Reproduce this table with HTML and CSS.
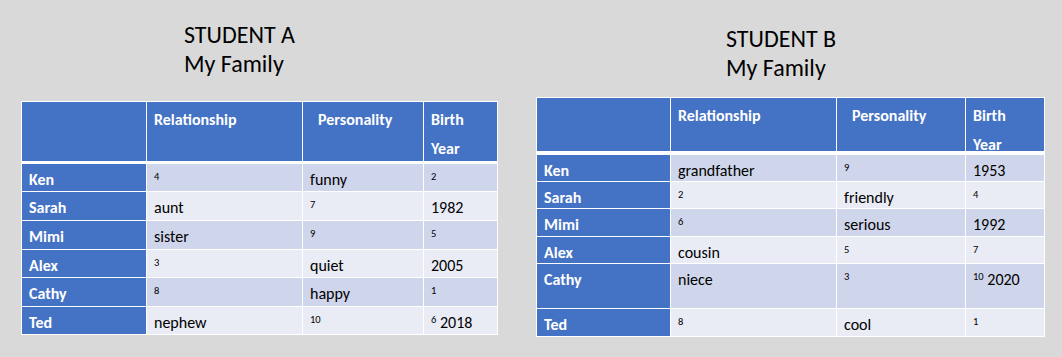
FILE: index.html
```html
<!DOCTYPE html>
<html lang="en">
<head>
<meta charset="utf-8">
<title>My Family</title>
<link rel="stylesheet" href="styles.css">
</head>
<body>
<main class="page">
  <section class="panel panel-a">
    <h1 class="title">STUDENT A<br>My Family</h1>
    <table class="fam fam-a">
      <colgroup>
        <col class="c-name"><col class="c-rel"><col class="c-per"><col class="c-year">
      </colgroup>
      <thead>
        <tr class="head">
          <th></th>
          <th>Relationship</th>
          <th class="th-per">Personality</th>
          <th><div class="two-line">Birth<br>Year</div></th>
        </tr>
      </thead>
      <tbody>
        <tr class="odd h27"><td class="name">Ken</td><td><sup>4</sup></td><td>funny</td><td><sup>2</sup></td></tr>
        <tr class="even h28"><td class="name">Sarah</td><td>aunt</td><td><sup>7</sup></td><td>1982</td></tr>
        <tr class="odd h28"><td class="name">Mimi</td><td>sister</td><td><sup>9</sup></td><td><sup>5</sup></td></tr>
        <tr class="even h27"><td class="name">Alex</td><td><sup>3</sup></td><td>quiet</td><td>2005</td></tr>
        <tr class="odd h28"><td class="name">Cathy</td><td><sup>8</sup></td><td>happy</td><td><sup>1</sup></td></tr>
        <tr class="even h27"><td class="name">Ted</td><td>nephew</td><td><sup>10</sup></td><td><sup>6</sup> 2018</td></tr>
      </tbody>
    </table>
  </section>

  <section class="panel panel-b">
    <h1 class="title">STUDENT B<br>My Family</h1>
    <table class="fam fam-b">
      <colgroup>
        <col class="c-name"><col class="c-rel"><col class="c-per"><col class="c-year">
      </colgroup>
      <thead>
        <tr class="head">
          <th></th>
          <th>Relationship</th>
          <th class="th-per">Personality</th>
          <th><div class="two-line">Birth<br>Year</div></th>
        </tr>
      </thead>
      <tbody>
        <tr class="odd h25"><td class="name">Ken</td><td>grandfather</td><td><sup>9</sup></td><td>1953</td></tr>
        <tr class="even h26"><td class="name">Sarah</td><td><sup>2</sup></td><td>friendly</td><td><sup>4</sup></td></tr>
        <tr class="odd h27"><td class="name">Mimi</td><td><sup>6</sup></td><td>serious</td><td>1992</td></tr>
        <tr class="even h26"><td class="name">Alex</td><td>cousin</td><td><sup>5</sup></td><td><sup>7</sup></td></tr>
        <tr class="odd h44"><td class="name">Cathy</td><td>niece</td><td><sup>3</sup></td><td><sup>10</sup> 2020</td></tr>
        <tr class="even h27"><td class="name">Ted</td><td><sup>8</sup></td><td>cool</td><td><sup>1</sup></td></tr>
      </tbody>
    </table>
  </section>
</main>
</body>
</html>
```

FILE: styles.css
```css
html, body {
  margin: 0;
  padding: 0;
}

body {
  background: #d9d9d9;
  font-family: "Carlito", "Lato", "Liberation Sans", sans-serif;
  color: #000;
  width: 1062px;
  height: 357px;
  overflow: hidden;
}

.page {
  display: flex;
  align-items: flex-start;
}

.panel {
  display: flex;
  flex-direction: column;
}

.panel-a {
  margin-left: 21px;
  width: 477px;
}

.panel-b {
  margin-left: 38px;
  width: 509px;
}

.title {
  margin: 0;
  font-size: 24px;
  font-weight: normal;
  line-height: 28.7px;
}

.panel-a .title {
  margin: 21px 0 22.6px 163px;
}

.panel-b .title {
  margin: 25.3px 0 14.3px 190px;
}

.fam {
  border-collapse: separate;
  border-spacing: 1px;
  background: #fff;
  table-layout: fixed;
  font-size: 16px;
}

.fam-a { width: 477px; }
.fam-b { width: 509px; }

.fam-a .c-name { width: 124px; }
.fam-a .c-rel  { width: 155px; }
.fam-a .c-per  { width: 120px; }
.fam-a .c-year { width: 73px; }

.fam-b .c-name { width: 133px; }
.fam-b .c-rel  { width: 165px; }
.fam-b .c-per  { width: 128px; }
.fam-b .c-year { width: 78px; }

.fam th,
.fam td {
  padding: 6px 0 0 7px;
  vertical-align: top;
  text-align: left;
  white-space: nowrap;
}

.fam th {
  background: #4472c4;
  color: #fff;
  font-weight: bold;
  line-height: 29px;
  padding-top: 3px;
  border-bottom: 2px solid #fff;
}

.fam-b th {
  padding-top: 3px;
  border-bottom-width: 3px;
}

.fam th .two-line {
  height: 29px;
  overflow: visible;
}

.fam .th-per {
  padding-left: 15px;
}

.fam-a .head { height: 61px; }
.fam-b .head { height: 56px; }

.fam td {
  line-height: 20px;
}

.fam td.name {
  background: #4472c4;
  color: #fff;
  font-weight: bold;
}

.odd td { background: #cfd5ea; }
.even td { background: #e9ebf5; }

.h25 { height: 25px; }
.h26 { height: 26px; }
.h27 { height: 27px; }
.h28 { height: 28px; }
.h44 { height: 44px; }

.fam sup {
  font-size: 10.5px;
  line-height: 0;
  vertical-align: 5px;
}
```
